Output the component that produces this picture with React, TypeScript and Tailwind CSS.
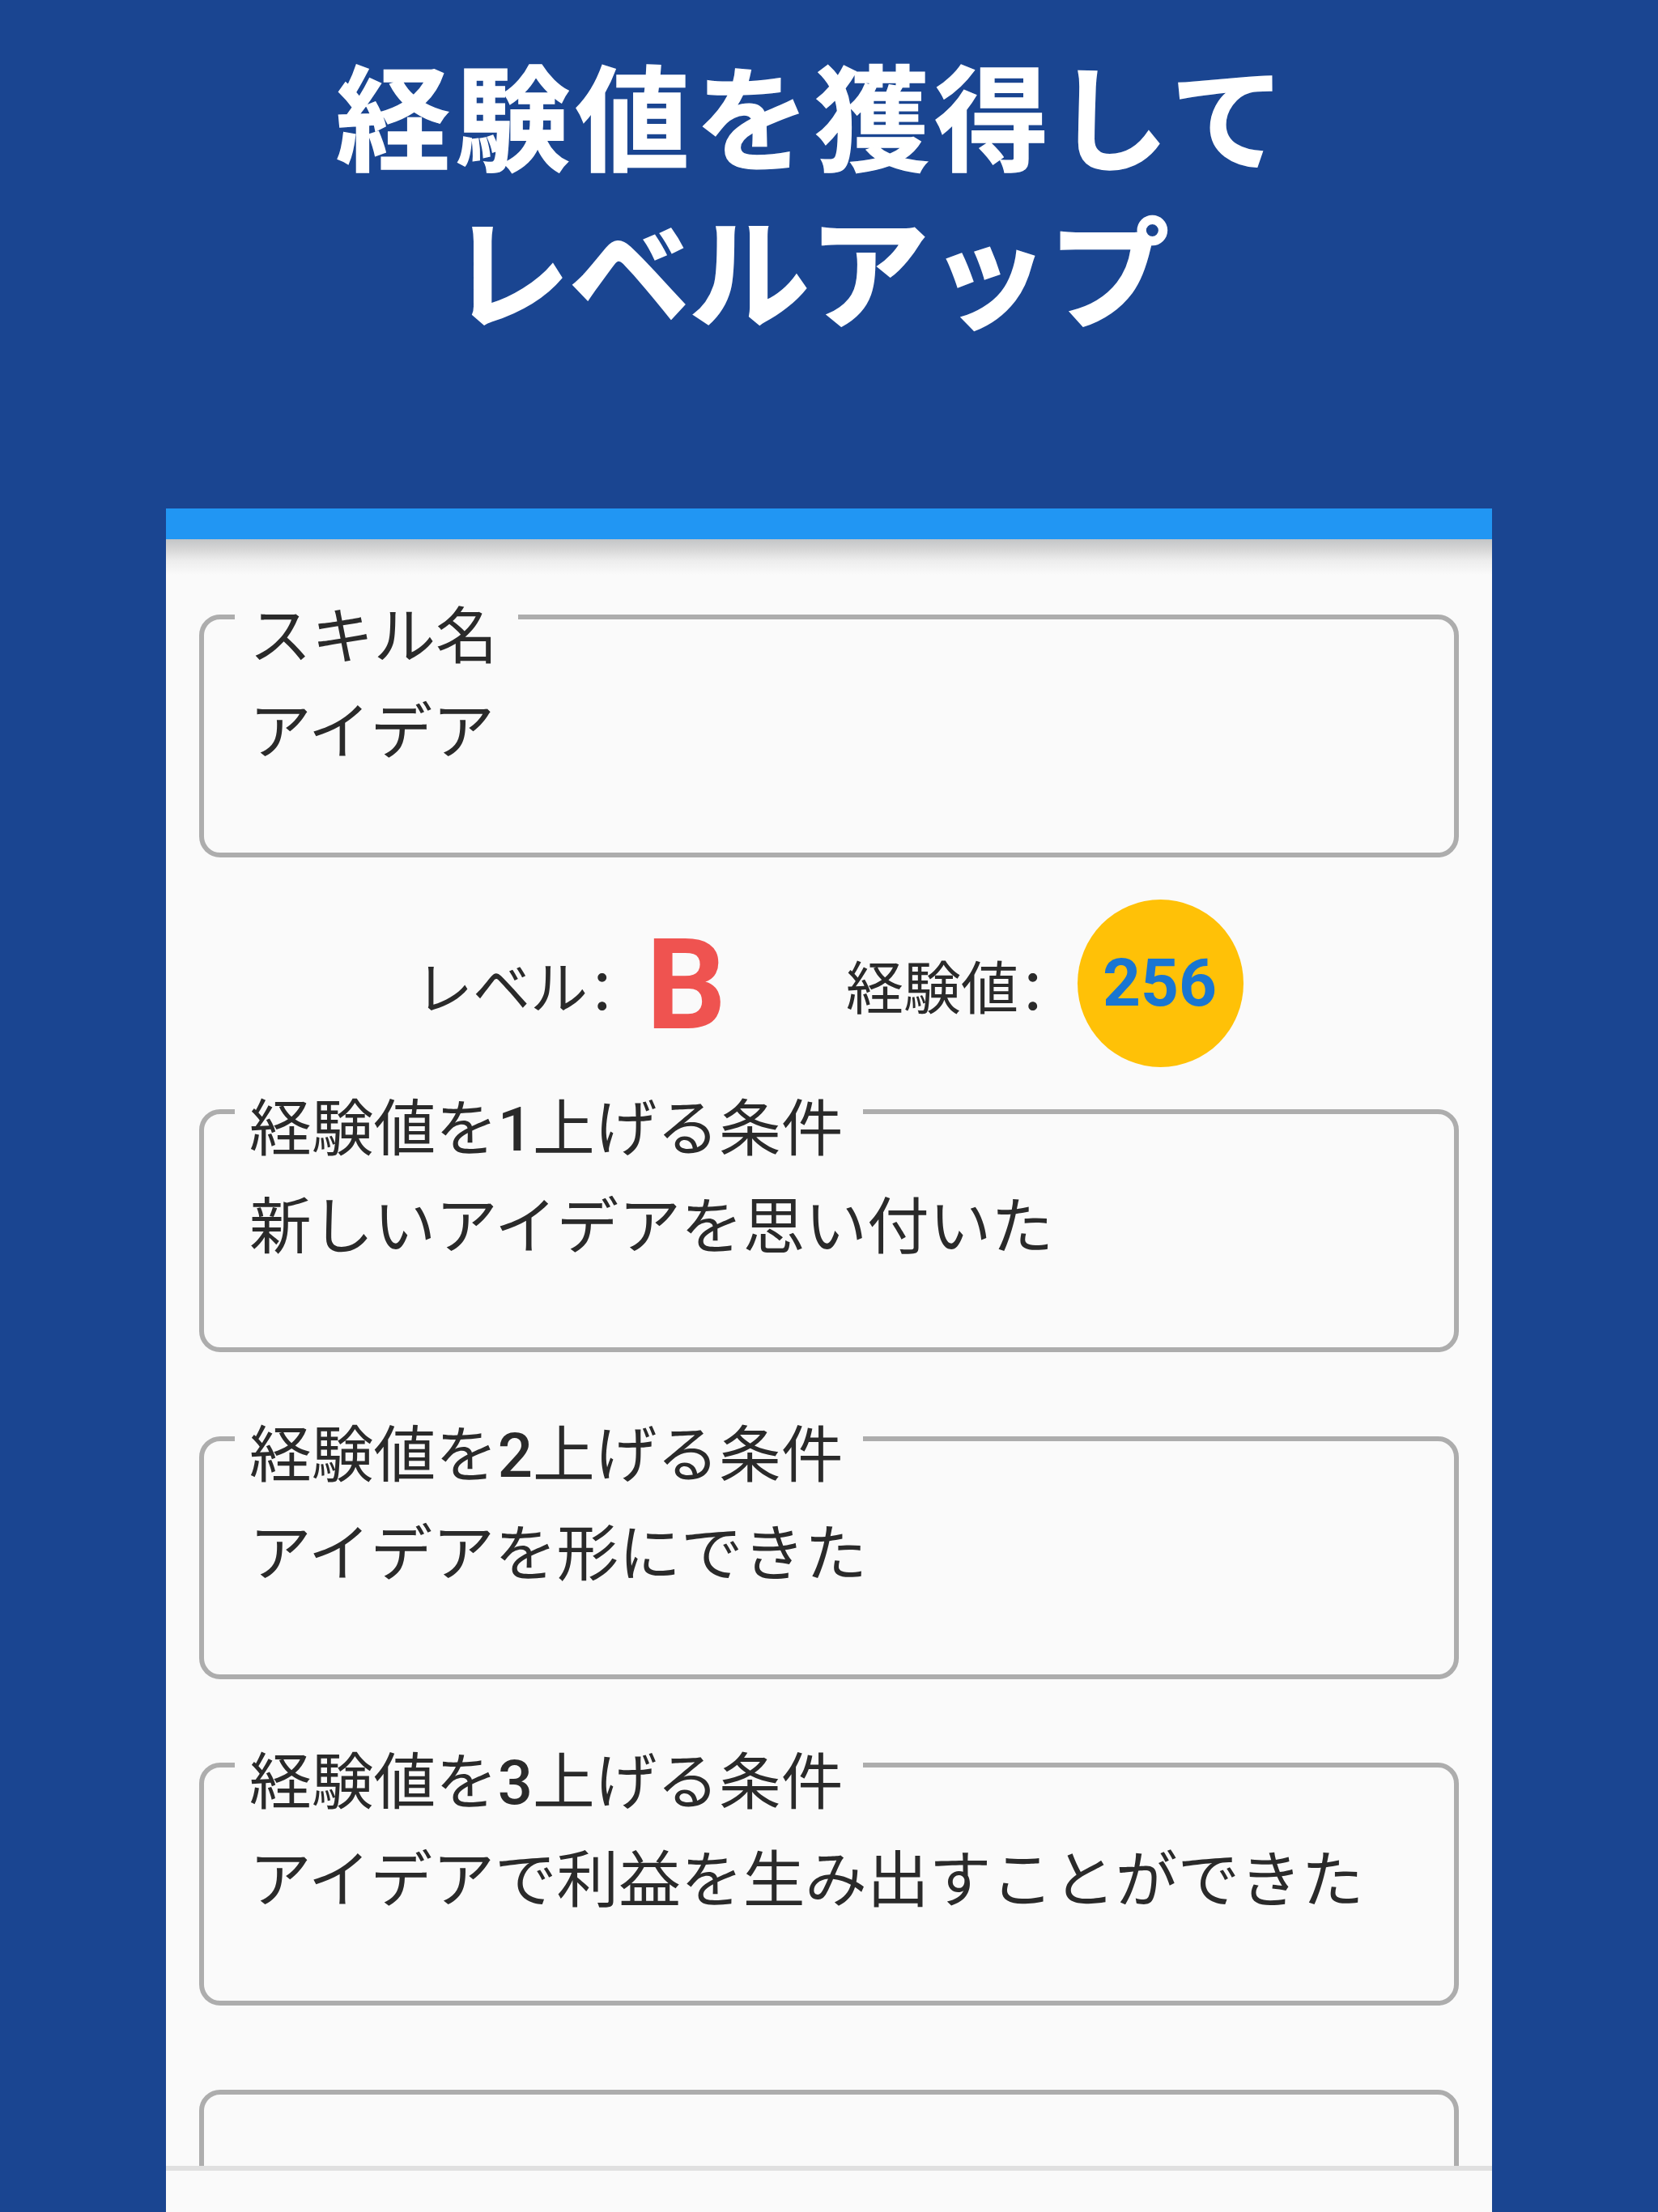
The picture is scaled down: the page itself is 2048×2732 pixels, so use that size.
import React from "react";

type FieldProps = { label?: React.ReactNode; value?: string };

function Digit({ children }: { children: React.ReactNode }) {
  return <span className="font-['Roboto'] text-[76px] font-medium">{children}</span>;
}

function Colon() {
  return <span className="inline-block translate-y-[5px] [font-feature-settings:'halt']">：</span>;
}

function Field({ label, value }: FieldProps) {
  return (
    <div className="h-[300px] w-[1556px] shrink-0 rounded-[26px] border-[6px] border-[#adadad] pl-[38px]">
      {label && (
        <div className="-mt-[45px] flex h-[120px] w-fit items-center bg-[#fafafa] pl-[18px] pr-[25px]">
          <span className="whitespace-nowrap text-[76.7px] leading-[120px]">{label}</span>
        </div>
      )}
      {value && (
        <div className="-mt-[2px] whitespace-nowrap pl-[18px] text-[76.7px] leading-[120px]">{value}</div>
      )}
    </div>
  );
}

export default function App() {
  return (
    <div
      lang="ja"
      className="flex h-[2732px] w-[2048px] flex-col overflow-hidden bg-[#1a4591] font-['Noto_Sans_CJK_JP',sans-serif] text-[#2a2a2a]"
    >
      <h1 className="h-[628px] shrink-0 pt-[43px] font-bold leading-[192px] text-white">
        <span className="block whitespace-nowrap pl-[415px] text-[141px] tracking-[6.9px] [-webkit-text-stroke:1.5px_white]">
          経験値を獲得して
        </span>
        <span className="-mt-[2px] block whitespace-nowrap pl-[555px] text-[149px] tracking-[-1px] [-webkit-text-stroke:2px_white]">
          レベルアップ
        </span>
      </h1>

      <main className="mx-[205px] flex h-[2104px] w-[1638px] flex-col overflow-hidden bg-[#fafafa]">
        <div className="h-[38px] shrink-0 bg-[#2196f3]" />
        <div className="h-[44px] shrink-0 bg-[linear-gradient(to_bottom,#c3c5c7_0%,#d6d6d6_28%,#ededed_60%,#fafafa_100%)]" />

        <div className="flex h-[1965px] shrink-0 flex-col overflow-hidden px-[41px] pt-[49px]">
          <Field label="スキル名" value="アイデア" />

          <div className="flex h-[311px] shrink-0 items-center pl-[267px] text-[71px]">
            <span className="w-[285px] whitespace-nowrap pt-[2px]">
              レベル<Colon />
            </span>
            <span className="w-[247px] pt-[6px] font-['Roboto'] text-[155px] font-bold leading-none text-[#ef5350]">
              B
            </span>
            <span className="w-[286px] whitespace-nowrap pt-[2px]">
              経験値<Colon />
            </span>
            <span className="flex h-[207px] w-[205px] items-center justify-center rounded-[50%] bg-[#ffc107] pr-[2px] font-['Roboto'] text-[82px] font-bold text-[#1976d2]">
              256
            </span>
          </div>

          <div className="flex shrink-0 flex-col gap-[103.5px]">
            <Field label={<>経験値を<Digit>1</Digit>上げる条件</>} value="新しいアイデアを思い付いた" />
            <Field label={<>経験値を<Digit>2</Digit>上げる条件</>} value="アイデアを形にできた" />
            <Field label={<>経験値を<Digit>3</Digit>上げる条件</>} value="アイデアで利益を生み出すことができた" />
            <Field />
          </div>
        </div>
        <div className="h-[6px] shrink-0 bg-[#e0e0e0]" />
      </main>
    </div>
  );
}
